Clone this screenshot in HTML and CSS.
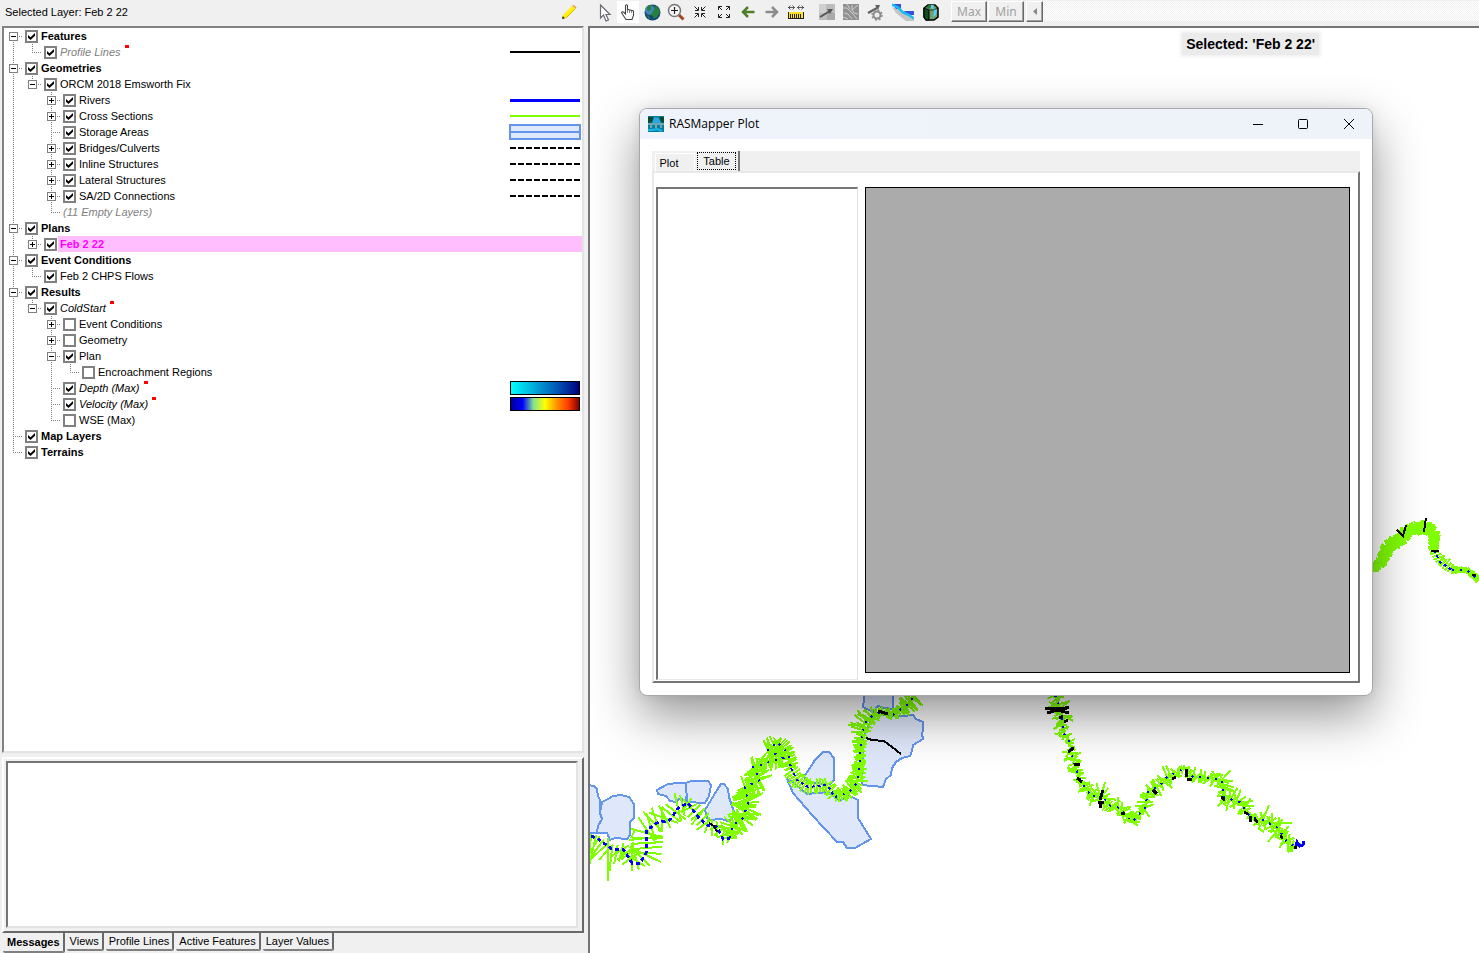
FILE: index.html
```html
<!DOCTYPE html>
<html lang="en">
<head>
<meta charset="utf-8">
<title>RAS Mapper</title>
<link rel="stylesheet" href="styles.css">
</head>
<body>
<div class="app">
  <aside class="side">
    <header class="side-head">
      <span>Selected Layer: Feb 2 22</span>
      <button class="edit" aria-label="Edit layer"><svg width="16" height="16" viewBox="0 0 16 16"><path d="M1 15l1-4 9-9 3 3-9 9z" fill="#ffee00"/><path d="M3 12l8-8" stroke="#fff34a"/><path d="M5 14l9-9" stroke="#d8b800"/><path d="M11 1.500l3.500 3.500 1-1.500L13 1z" fill="#e8a33a"/><path d="M1 15l.8-3 2.200 2.200z" fill="#222"/></svg></button>
    </header>

    <nav class="tree" aria-label="Layers">
      <ul>
        <li><div class="row"><button class="ex" aria-label="Collapse"></button><label class="b"><input type="checkbox" checked><span>Features</span></label></div>
          <ul>
            <li><div class="row"><i class="nx"></i><label class="it gray"><input type="checkbox" checked><span>Profile Lines</span><i class="dot"></i></label><i class="sw line"></i></div></li>
          </ul>
        </li>
        <li><div class="row"><button class="ex" aria-label="Collapse"></button><label class="b"><input type="checkbox" checked><span>Geometries</span></label></div>
          <ul>
            <li><div class="row"><button class="ex" aria-label="Collapse"></button><label><input type="checkbox" checked><span>ORCM 2018 Emsworth Fix</span></label></div>
              <ul>
                <li><div class="row"><button class="ex plus" aria-label="Expand"></button><label><input type="checkbox" checked><span>Rivers</span></label><i class="sw river"></i></div></li>
                <li><div class="row"><button class="ex plus" aria-label="Expand"></button><label><input type="checkbox" checked><span>Cross Sections</span></label><i class="sw cross"></i></div></li>
                <li><div class="row"><i class="nx"></i><label><input type="checkbox" checked><span>Storage Areas</span></label><i class="sw area"></i></div></li>
                <li><div class="row"><button class="ex plus" aria-label="Expand"></button><label><input type="checkbox" checked><span>Bridges/Culverts</span></label><i class="sw dash"></i></div></li>
                <li><div class="row"><button class="ex plus" aria-label="Expand"></button><label><input type="checkbox" checked><span>Inline Structures</span></label><i class="sw dash"></i></div></li>
                <li><div class="row"><button class="ex plus" aria-label="Expand"></button><label><input type="checkbox" checked><span>Lateral Structures</span></label><i class="sw dash"></i></div></li>
                <li><div class="row"><button class="ex plus" aria-label="Expand"></button><label><input type="checkbox" checked><span>SA/2D Connections</span></label><i class="sw dash"></i></div></li>
                <li><div class="row"><i class="nx"></i><em class="gray">(11 Empty Layers)</em></div></li>
              </ul>
            </li>
          </ul>
        </li>
        <li><div class="row"><button class="ex" aria-label="Collapse"></button><label class="b"><input type="checkbox" checked><span>Plans</span></label></div>
          <ul>
            <li><div class="row"><button class="ex plus" aria-label="Expand"></button><label class="b picked"><input type="checkbox" checked><span>Feb 2 22</span></label></div></li>
          </ul>
        </li>
        <li><div class="row"><button class="ex" aria-label="Collapse"></button><label class="b"><input type="checkbox" checked><span>Event Conditions</span></label></div>
          <ul>
            <li><div class="row"><i class="nx"></i><label><input type="checkbox" checked><span>Feb 2 CHPS Flows</span></label></div></li>
          </ul>
        </li>
        <li><div class="row"><button class="ex" aria-label="Collapse"></button><label class="b"><input type="checkbox" checked><span>Results</span></label></div>
          <ul>
            <li><div class="row"><button class="ex" aria-label="Collapse"></button><label class="it"><input type="checkbox" checked><span>ColdStart</span><i class="dot"></i></label></div>
              <ul>
                <li><div class="row"><button class="ex plus" aria-label="Expand"></button><label><input type="checkbox"><span>Event Conditions</span></label></div></li>
                <li><div class="row"><button class="ex plus" aria-label="Expand"></button><label><input type="checkbox"><span>Geometry</span></label></div></li>
                <li><div class="row"><button class="ex" aria-label="Collapse"></button><label><input type="checkbox" checked><span>Plan</span></label></div>
                  <ul>
                    <li><div class="row"><i class="nx"></i><label><input type="checkbox"><span>Encroachment Regions</span></label></div></li>
                  </ul>
                </li>
                <li><div class="row"><i class="nx"></i><label class="it"><input type="checkbox" checked><span>Depth (Max)</span><i class="dot"></i></label><i class="sw ramp depth"></i></div></li>
                <li><div class="row"><i class="nx"></i><label class="it"><input type="checkbox" checked><span>Velocity (Max)</span><i class="dot"></i></label><i class="sw ramp velocity"></i></div></li>
                <li><div class="row"><i class="nx"></i><label><input type="checkbox"><span>WSE (Max)</span></label></div></li>
              </ul>
            </li>
          </ul>
        </li>
        <li><div class="row"><i class="nx"></i><label class="b"><input type="checkbox" checked><span>Map Layers</span></label></div></li>
        <li><div class="row"><i class="nx"></i><label class="b"><input type="checkbox" checked><span>Terrains</span></label></div></li>
      </ul>
    </nav>

    <section class="log"><textarea aria-label="Messages" readonly></textarea></section>
    <div class="log-tabs" role="tablist">
      <button role="tab" class="on" aria-selected="true">Messages</button>
      <button role="tab">Views</button>
      <button role="tab">Profile Lines</button>
      <button role="tab">Active Features</button>
      <button role="tab">Layer Values</button>
    </div>
  </aside>

  <main class="main">
    <div class="tools" role="toolbar" aria-label="Map tools">
      <button class="tool" aria-label="Select"><svg width="16" height="20" viewBox="0 0 16 20"><path d="M4.500 3v13l3-3 2.500 6 2.500-1-2.500-5.500h4z" fill="#fff" stroke="#6a6a74" stroke-width="1.200"/></svg></button>
      <button class="tool on" aria-label="Pan"><svg width="16" height="18" viewBox="0 0 16 18"><path d="M5.500 10V2.500q1-1.500 2 0V7q1-1 2 .3 1-.8 2 .4 1.500-.7 2 .8v4l-1.500 4h-6L3 12l-1.500-2.500q1-1.500 2.500 0l1.500 1.500z" fill="#fff" stroke="#444" stroke-width="1.100"/><path d="M7.500 7v3M9.500 7.500V10M11.500 8v2" stroke="#888" fill="none"/></svg></button>
      <button class="tool" aria-label="Full extent"><svg width="17" height="17" viewBox="0 0 17 17"><circle cx="8.500" cy="8.500" r="8" fill="#134a78"/><circle cx="6" cy="6" r="5" fill="#4d95bd" opacity=".8"/><path d="M3 3l2-2 3 0-1 2 0 2-2 2-2-1zM9 7l2-2-1-2 2-1 3 3 1 4-2 2-1 2-3 2-1-3-2-1zM3 11l2 1 1 3-2-1z" fill="#27803a"/></svg></button>
      <button class="tool" aria-label="Zoom in"><svg width="18" height="18" viewBox="0 0 18 18"><path d="M12 12l4.500 4.500" stroke="#a8431d" stroke-width="3"/><circle cx="7.500" cy="7.500" r="6" fill="#f6f6f6" stroke="#777" stroke-width="1.500"/><path d="M4 7.500h7M7.500 4v7" stroke="#222" stroke-width="1.200"/></svg></button>
      <button class="tool" aria-label="Zoom to smaller"><svg width="12" height="12" viewBox="0 0 12 12" fill="none" stroke="#222"><path d="M.5.5l3.500 3.500M4.500 1v3.500H1M11.500.5L8 4M7.500 1v3.500H11M.5 11.500L4 8M1 7.500h3.500V11M11.500 11.500L8 8M11 7.500H7.500V11"/></svg></button>
      <button class="tool" aria-label="Zoom to larger"><svg width="12" height="12" viewBox="0 0 12 12" fill="none" stroke="#222"><path d="M.5 4V.5H4M.5.5L4 4M8 .5h3.500V4M11.500.5L8 4M.5 8v3.500H4M.5 11.500L4 8M8 11.500h3.500V8M11.500 11.500L8 8"/></svg></button>
      <button class="tool" aria-label="Previous view"><svg width="14" height="12" viewBox="0 0 14 12" fill="none" stroke="#4e7f27" stroke-width="2.500"><path d="M2 6H13.500M7 1L2 6l5 5"/></svg></button>
      <button class="tool" aria-label="Next view"><svg width="14" height="12" viewBox="0 0 14 12" fill="none" stroke="#8c8c8c" stroke-width="2.500"><path d="M12 6H.5M7 1l5 5-5 5"/></svg></button>
      <button class="tool" aria-label="Measure"><svg width="16" height="14" viewBox="0 0 16 14"><path d="M0 2.500h6.500M9.500 2.500H16M2.500.5l-2 2 2 2M13.500.5l2 2-2 2M4.500.5l2 2-2 2M11.500.5l-2 2 2 2" fill="none" stroke="#333" stroke-width=".8"/><path d="M0 7h16v6H0z" fill="#ffe11f"/><path d="M.5 7v6M2.500 9v4M4.500 9v4M6.500 9v4M8.500 9v4M10.500 9v4M12.500 9v4M15.500 7v6" stroke="#222"/><path d="M0 13.500h16" stroke="#222"/></svg></button>
      <span class="gap"></span>
      <button class="tool" aria-label="Velocity arrows" disabled><svg width="16" height="16" viewBox="0 0 16 16"><path d="M0 0h16v16H0z" fill="#bdbdbd"/><path d="M0 0h7v9H0z" fill="#cfcfcf"/><path d="M8 9h8v7H8z" fill="#a9a9a9"/><path d="M1 13L11 7" stroke="#555" stroke-width="2"/><path d="M8 5h6l-3 5z" fill="#555"/></svg></button>
      <button class="tool" aria-label="Particle tracing" disabled><svg width="16" height="16" viewBox="0 0 16 16"><path d="M0 0h16v16H0z" fill="#919191"/><path d="M0 4l4 0 5 5 5 6M1 9l4 1 4 5M4 0l3 5M9 1l0 5 6-5M9 6l2 3 4 1M0 13l5 2" fill="none" stroke="#cdcdcd"/></svg></button>
      <button class="tool" aria-label="Arrow settings" disabled><svg width="16" height="17" viewBox="0 0 16 17"><path d="M1 9l9-5" stroke="#606060" stroke-width="2.200"/><path d="M8 1h5l-2 5z" fill="#606060"/><circle cx="10" cy="11" r="3.500" fill="#eee" stroke="#8c8c8c" stroke-width="2"/><circle cx="10" cy="11" r="5" fill="none" stroke="#8c8c8c" stroke-width="1.500" stroke-dasharray="2 1.900"/></svg></button>
      <button class="tool wide" aria-label="Profile"><svg width="22" height="18" viewBox="0 0 22 18"><path d="M0 4l12 5 10 7v2h-8L4 10z" fill="#c4c4c4"/><path d="M0 1h9v5H4zM12 8h10v4h-7z" fill="#3a50dc"/><path d="M0 1.500l6 3 5 5 5 2 6 4" fill="none" stroke="#17bdf5" stroke-width="2.500"/></svg></button>
      <button class="tool" aria-label="3D view"><svg width="18" height="17" viewBox="0 0 18 17"><path d="M2 4l4-3h7l3 3v9l-4 3H4l-2-3z" fill="#6f9f6c" stroke="#000" stroke-width="1.500"/><path d="M2 4l5 2v10H4l-2-3z" fill="#154d24" stroke="#000"/><path d="M3 4l4-3h4L7 5z" fill="#2c7a3a"/><path d="M9 1h3l-1 3 4 2-1 5-3 2 1-5 0-2-3-2z" fill="#55cdf5"/><path d="M7 6h4l5-2" stroke="#000" fill="none" stroke-width=".6"/></svg></button>
      <span class="gap"></span>
      <button class="push" disabled>Max</button>
      <button class="push" disabled>Min</button>
      <button class="push arrow" aria-label="Scroll left" disabled><svg width="4" height="7" viewBox="0 0 4 7"><path d="M4 0v7L0 3.500z" fill="#858585"/></svg></button>
      <span class="track"></span>
    </div>

    <div class="map">
      <svg class="geo" aria-label="Map" shape-rendering="crispEdges">
        <g transform="translate(-590 -28)">
          <g fill="#dfe8fa" stroke="#6495ed" stroke-width="2">
            <path d="M588 785l6 1 3 3 1 7 2 4 0 7 2 12-3 6-2 8h-9z"/>
            <path d="M602 802l6-3 5-3 8-1 8 2 5 7v14l-4 4v13l-3 4-12-1-5 2-3-7-10 0 1-7 4-7-2-6z"/>
            <path d="M657 790l11-6 10-1 8 0 1 10-1 7-7-1-3 3-6-1-4-5-8-2z"/>
            <path d="M686 783l5-2h17l3 4-2 11-4 7-18-1z"/>
            <path d="M717 790l4-6 3 0 4 5 1 8 5 15-3 8-4 1-5-2-14 1-3-10z"/>
            <path d="M804 777l11-17 8-8 6 0 5 6v22l-4 4-20-1z"/>
            <path d="M787 779l7 4 13 11 21-2 12 9 8-6 10 5v18l13 21-16 9h-8l-4-6h-6l-25-27-19-22z"/>
            <path d="M864 690v10l-1 7 10 5 5-6 7 2 8 1V690z"/>
            <path d="M873 717l10-2 10 1 10 0 10-1 3 4 7 3v8l-1 4 1 5-10 6-1 6-2 5-8 2-6 4-4 6-1 7-5 4-3 8-21-2 1-48z"/>
          </g>
          <g id="reaches"></g>
          <g fill="none" stroke="#000" stroke-width="2">
            <path d="M866 738l6 2 12 1 8 6 9 7M709 823l5 3 3 6"/>
            <path stroke-width="3" d="M878 711l10 3M1045 708l22 1M1047 713l22-6M1053 709l16 4M1059 718l4-2M1064 722l4-2M1068 752l6-4M1074 764h6M1077 778l5 4M1103 790l-3 10M1098 802h6M1100 808l1-6M1121 813l4 1M1153 790l4 4M1172 779l4-2M1186 769v8M1187 779h5M1221 797l4 3M1244 812l4 2M1250 822v-6M1254 819l4 3M1280 836l3 2M1294 847l3 1"/>
            <path d="M1397 530l6 6 3-11M1426 518l-2 14M1431 551h8M1472 575h4"/>
            <path d="M1296 846l1-4 3 4 3-1 1-4" stroke="#0000ff" stroke-width="3"/>
          </g>
        </g>
      </svg>
      <div class="status">Selected: 'Feb 2 22'</div>

      <section class="window" aria-label="RASMapper Plot">
        <header class="title">
          <svg width="16" height="16" viewBox="0 0 16 16"><path d="M0 0h16v16H0z" fill="#087c9c"/><path d="M0 1h5l2 2-2 3-5 1zM12 1h4v6l-3-1-2-3z" fill="#0a4a33"/><path d="M6 1l5 1 2 5H4z" fill="#24a7e6"/><path d="M0 8h16M3 9v3M8 9v3M13 9v3" stroke="#8fb4b4" stroke-width="1.500"/><path d="M0 14h4l5-1 5 2" stroke="#1bb6e8" stroke-width="2" fill="none"/></svg>
          <h1>RASMapper Plot</h1>
          <button aria-label="Minimize"><svg width="10" height="10"><path d="M0 5.500h10" stroke="#000"/></svg></button>
          <button aria-label="Maximize"><svg width="10" height="10"><rect x=".5" y=".5" width="9" height="9" rx="1" fill="none" stroke="#000"/></svg></button>
          <button aria-label="Close"><svg width="10" height="10"><path d="M0 0l10 10M10 0L0 10" stroke="#000"/></svg></button>
        </header>
        <div class="body">
          <div class="tabs" role="tablist">
            <button role="tab">Plot</button>
            <button role="tab" class="on" aria-selected="true"><span>Table</span></button>
          </div>
          <div class="pane">
            <div class="list"></div>
            <div class="grid"></div>
          </div>
        </div>
      </section>
    </div>
  </main>
</div>
<script src="reaches.js"></script>
</body>
</html>
```
FILE: styles.css
```css
* { box-sizing: border-box; }
body {
  margin: 0;
  font: 11px/16px "Liberation Sans", Arial, sans-serif;
  color: #000;
  background: #f0f0f0;
}
button { font: inherit; color: inherit; margin: 0; padding: 0; border: 0; background: none; }
svg { display: block; flex: none; }
.app { display: grid; grid-template-columns: 588px minmax(0, 1fr); height: 100vh; overflow: hidden; }

/* layer panel */
.side { display: flex; flex-direction: column; min-height: 0; padding: 0 4px 0 2px; }
.side-head {
  display: flex; align-items: center; justify-content: space-between;
  flex: none; height: 26px; padding: 0 7px 2px 3px;
}
.tree {
  flex: 1; min-height: 0; overflow: hidden; background: #fff;
  border: 2px solid; border-color: #838383 #e3e3e3 #e3e3e3 #838383;
  margin-bottom: 4px;
}
.tree ul { list-style: none; margin: 0; padding: 0; }
.tree ul ul { padding-left: 19px; }
.tree li { position: relative; }
.tree li::before {
  content: ""; position: absolute; left: 9px; top: 0; width: 1px; height: 100%;
  background: repeating-linear-gradient(#808080 0 1px, transparent 1px 2px);
}
.tree li:last-child::before { height: 8px; }
.tree > ul > li:first-child::before { top: 8px; height: calc(100% - 8px); }
.row { display: flex; align-items: center; height: 16px; padding-left: 5px; position: relative; white-space: nowrap; }
.row::before {
  content: ""; position: absolute; left: 9px; top: 8px; width: 9px; height: 1px;
  background: repeating-linear-gradient(90deg, #808080 0 1px, transparent 1px 2px);
}
.ex {
  position: relative; flex: none; width: 9px; height: 9px; margin-right: 7px;
  border: 1px solid #808080;
  background: linear-gradient(#000, #000) center / 5px 1px no-repeat #fff;
}
.ex.plus {
  background: linear-gradient(#000, #000) center / 5px 1px no-repeat,
    linear-gradient(#000, #000) center / 1px 5px no-repeat #fff;
}
.nx { flex: none; width: 9px; margin-right: 7px; }
.row label { display: flex; flex: 1; align-items: center; height: 16px; }
.row label span { padding-left: 2px; }
.row em { flex: 1; }
.row input {
  appearance: none; flex: none; width: 13px; height: 13px; margin: 1px 1px 0 0;
  border: 2px solid #808080; background: #fff;
}
.row input:checked::before {
  content: ""; display: block; width: 7px; height: 7px; margin: 1px;
  background: #000;
  clip-path: polygon(0 28%, 36% 60%, 100% 0, 100% 40%, 36% 100%, 0 68%);
}
.b { font-weight: bold; }
.it { font-style: italic; }
.gray { color: #808080; }
.row .picked span { flex: 1; background: #ffbfff; color: #f0f; }
.dot { width: 4px; height: 3px; margin: 0 0 11px 4px; background: #f00; }
.sw { flex: none; width: 70px; margin-right: 2px; }
.line { height: 2px; background: #000; }
.river { height: 3px; background: #00f; }
.cross { height: 2px; background: #80ff00; }
.area {
  width: 72px; height: 16px; margin-right: 1px; border: 2px solid #6495ed;
  background: linear-gradient(#6495ed, #6495ed) center / 100% 2px no-repeat #dfe8fa;
}
.dash { height: 2px; background: repeating-linear-gradient(90deg, #000 0 6px, transparent 6px 8px); }
.ramp { height: 14px; border: 1px solid #000; }
.depth { background: linear-gradient(90deg, #0ff, #00b4dc 30%, #0050b4 70%, #00007d); }
.velocity { background: linear-gradient(90deg, #00009c, #00f 17%, #7fe38e 33%, #ff0 50%, #f90 66%, #ff3c00 84%, #800000); }

/* message log */
.log {
  flex: none; height: 176px; padding: 2px 4px 3px 2px;
  border: 2px solid; border-color: #fff #696969 #696969 #fff;
}
.log textarea {
  display: block; width: 100%; height: 100%; resize: none; outline: 0; background: #fff;
  border: 2px solid; border-color: #757575 #e3e3e3 #e3e3e3 #757575;
}
.log-tabs { display: flex; gap: 2px; height: 20px; padding-left: 1px; align-items: flex-start; flex: none; }
.log-tabs button {
  height: 18px; padding: 0 3px; line-height: 16px; white-space: nowrap;
  border-right: 2px solid #696969; border-bottom: 2px solid #808080; border-radius: 0 0 2px 2px;
}
.log-tabs .on { height: 20px; padding: 0 3px 0 4px; font-weight: bold; }

/* toolbar */
.main { display: flex; flex-direction: column; min-width: 0; }
.tools { display: flex; flex: none; height: 26px; padding-left: 4px; }
.tool { display: flex; align-items: center; justify-content: center; flex: none; width: 24px; height: 24px; }
.tool.on { background: #fff; background-clip: content-box; padding: 1px; }
.tool.wide { width: 32px; }
.gap { flex: none; width: 7px; }
.gap ~ .gap { width: 8px; }
.push {
  display: flex; align-items: center; justify-content: center; flex: none;
  width: 36px; height: 21px; margin: 1px 1px 0 0;
  font: 12px/16px "Noto Sans", sans-serif; color: #a0a0a0;
  border: 1px solid; border-color: #fff #696969 #696969 #fff;
  box-shadow: inset -1px -1px #a0a0a0;
}
.push.arrow { width: 17px; margin: 1px 0 0 1px; }
.track { flex: 1; height: 20px; margin-top: 1px; background: repeating-conic-gradient(#fff 0 25%, #f0f0f0 0 50%) 0 0 / 2px 2px; }

/* map */
.map {
  position: relative; flex: 1; min-height: 0; overflow: hidden; background: #fff;
  border: 2px solid; border-width: 2px 0 0 2px; border-color: #757575;
}
.geo { width: 100%; height: 100%; }
.status {
  position: absolute; top: 5px; right: 160px; padding: 2px 4px;
  font-size: 14px; line-height: 18px; font-weight: bold; white-space: nowrap;
  background: #ebebeb; box-shadow: 0 0 3px 2px #f1f1f1;
}

/* plot window */
.window {
  position: absolute; left: 49px; top: 80px; width: 734px; height: 588px;
  display: flex; flex-direction: column; overflow: hidden;
  background: #fff; border: 1px solid #a6a8ac; border-radius: 8px;
  box-shadow: 0 20px 50px rgba(0, 0, 0, .42), 0 0 12px rgba(0, 0, 0, .08);
}
.title { display: flex; align-items: center; flex: none; height: 30px; padding-left: 8px; background: linear-gradient(90deg, #eff3fb, #edf3f8); }
.title h1 { flex: 1; margin: 0 0 0 5px; font: 12px/16px "Open Sans", "Noto Sans", sans-serif; }
.title button { display: flex; align-items: center; justify-content: center; width: 46px; height: 28px; }
.title button:first-of-type { width: 44px; }
.body { display: flex; flex: 1; flex-direction: column; min-height: 0; padding: 12px; }
.tabs { display: flex; align-items: flex-end; flex: none; height: 20px; padding-left: 3px; background: #f0f0f0; }
.tabs button { width: 40px; height: 18px; padding-right: 12px; border: 1px solid #fff; border-width: 1px 1px 0; }
.tabs .on { width: 45px; height: 20px; padding: 0 2px 1px; background: #f0f0f0; border: 0; border-right: 2px solid #757575; }
.tabs .on span { display: block; height: 18px; line-height: 16px; border: 1px dotted #000; }
.pane {
  display: flex; flex: 1; gap: 7px; min-height: 0; padding: 14px 8px 1px 2px;
  border: 2px solid; border-color: #e9e9e9 #757575 #757575 #e9e9e9;
}
.list { flex: 0 0 202px; border: 1px solid; border-width: 2px 1px 1px 2px; border-color: #757575 #e3e3e3 #e9e9e9 #757575; }
.grid { flex: 1; margin-bottom: 7px; background: #ababab; border: 1px solid #000; }
```
FILE: reaches.js
```js
// Each reach is a list of x, y, left width, right width; cross sections are
// cut perpendicular to the centreline at the given step.
const reaches = [
  { step: 5, spread: 0.3, vary: 0.4, pts: [
    [591,836,2,18],[598,839,3,32],[612,849,4,20],[623,849,6,12],[627,855,10,9],[632,863,20,7],[640,863,24,7],
    [646,853,16,17],[647,830,16,16],[657,823,18,9],[670,820,19,10],[678,808,14,12],[688,803,6,12],
    [698,817,10,9],[707,825,8,10],[717,827,6,10],[723,839,8,5],[730,838,9,5]] },
  { step: 2, spread: 0.35, vary: 0.6, pts: [
    [730,838,8,6],[733,825,12,12],[743,818,13,13],[748,803,14,14],[745,787,12,12],[760,780,11,11],[753,767,9,9],
    [770,762,8,8],[783,758,9,9],[768,750,9,9],[777,742,8,8],[788,753,8,9],[791,768,6,9]] },
  { step: 3, spread: 0.2, vary: 0.4, pts: [
    [791,768,6,9],[797,780,8,8],[808,787,8,7],[827,785,7,8],[835,797,9,7]] },
  { step: 2, spread: 0.3, vary: 0.6, pts: [
    [835,797,8,6],[848,793,10,8],[857,783,9,9],[860,763,6,6],[861,740,8,5],[865,723,14,8],[873,715,8,7],
    [882,712,5,5],[893,715,5,5],[907,705,10,10],[915,695,11,11]] },
  { step: 2, spread: 0.9, vary: 1.1, pts: [
    [1055,695,7,7],[1062,713,10,10],[1063,732,7,6],[1070,743,4,5],[1073,760,7,9],[1080,780,6,6],[1092,797,9,7],
    [1102,793,8,8],[1108,805,8,8],[1120,808,8,8],[1132,822,5,5],[1145,808,7,7],[1148,792,6,6],[1163,783,8,8],
    [1167,777,8,8],[1185,768,4,4],[1193,777,7,6],[1210,778,5,6],[1222,780,9,7],[1223,797,9,9],[1240,802,11,8],
    [1250,817,5,5],[1263,820,7,7],[1278,828,9,9],[1287,842,8,7],[1296,847,5,5]] },
  { step: 1, spread: 0.15, vary: 0.4, pts: [
    [1370,567,5,5],[1380,565,6,6],[1388,547,7,7],[1403,537,7,7],[1407,530,6,6],[1425,527,7,7],[1434,532,6,6],
    [1434,550,5,5]] },
  { step: 3, spread: 0.2, vary: 0.4, pts: [[1434,550,4,5],[1440,562,8,4],[1452,570,6,4]] },
  { step: 1, spread: 0.1, vary: 0.3, pts: [[1452,570,4,4],[1467,570,3,3],[1479,580,4,4]] }
];
const extra = "M608 838v43M1263 820l6-15M1264 823h28M1268 842l8-10M632 838h31M635 830l-4 8M1264 832l-6-4";

let seed = 7;
const rnd = () => (seed = (seed * 16807) % 2147483647) / 2147483647;
const layer = document.getElementById("reaches");
const draw = (d, color, dash, width) => {
  const p = document.createElementNS("http://www.w3.org/2000/svg", "path");
  p.setAttribute("d", d);
  p.setAttribute("fill", "none");
  p.setAttribute("stroke", color);
  p.setAttribute("stroke-width", width);
  if (dash) p.setAttribute("stroke-dasharray", dash);
  layer.appendChild(p);
};

let cuts = extra;
for (const { step, spread, vary, pts } of reaches) {
  for (let i = 1; i < pts.length; i++) {
    const [x0, y0, l0, r0] = pts[i - 1];
    const [x1, y1, l1, r1] = pts[i];
    const len = Math.hypot(x1 - x0, y1 - y0);
    const a = Math.atan2(y1 - y0, x1 - x0) - Math.PI / 2;
    for (let s = 0; s < len; s += step) {
      const t = s / len;
      const x = x0 + (x1 - x0) * t, y = y0 + (y1 - y0) * t;
      const b = a + (rnd() - 0.5) * spread * 2;
      const l = (l0 + (l1 - l0) * t) * (0.95 + (rnd() - 0.5) * vary);
      const r = (r0 + (r1 - r0) * t) * (0.95 + (rnd() - 0.5) * vary);
      cuts += `M${(x + Math.cos(b) * l).toFixed(1)} ${(y + Math.sin(b) * l).toFixed(1)}` +
        `L${(x - Math.cos(b) * r).toFixed(1)} ${(y - Math.sin(b) * r).toFixed(1)}`;
    }
  }
}
draw(cuts, "#80ff00", "", 2);
reaches.forEach(({ step, pts }, i) => {
  const d = "M" + pts.map(p => p[0] + " " + p[1]).join("L");
  if (i === 0) draw(d, "#0000ff", "4 3", 3);
  else if (i !== 5) draw(d, "#0000ff", step === 3 ? "3 3" : "2 6", 2);
});
```
